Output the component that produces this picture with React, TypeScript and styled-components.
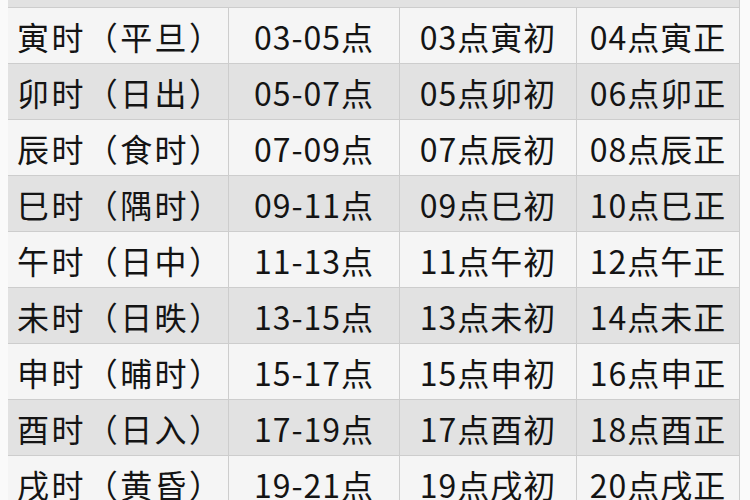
import React from "react";
import { styled, createGlobalStyle } from "styled-components";

const GlobalStyle = createGlobalStyle`
  html, body {
    margin: 0;
    padding: 0;
    background: #fafafa;
    overflow: hidden;
  }
  body {
    font-family: "Noto Sans CJK SC", "Noto Sans", sans-serif;
  }
`;

const Page = styled.div`
  width: 750px;
  height: 500px;
  overflow: hidden;
  padding-left: 8px;
  box-sizing: border-box;
`;

const Table = styled.div`
  width: 731px;
  display: grid;
  grid-template-columns: 220px 171px 177px 163px;
  border-right: 1px solid #cdcdcd;
`;

const HeaderStrip = styled.div`
  grid-column: 1 / -1;
  height: 7px;
  background: #e2e2e2;
  border-bottom: 1px solid #cdcdcd;
`;

const Cell = styled.div<{ $shade: boolean; $first?: boolean }>`
  height: 55px;
  box-sizing: content-box;
  display: flex;
  align-items: center;
  justify-content: ${(p) => (p.$first ? "flex-start" : "center")};
  padding-left: ${(p) => (p.$first ? "9px" : "0")};
  background: ${(p) => (p.$shade ? "#e2e2e2" : "#f5f5f5")};
  border-bottom: 1px solid #cdcdcd;
  border-left: ${(p) => (p.$first ? "none" : "1px solid #cdcdcd")};
  font-size: 32px;
  letter-spacing: ${(p) => (p.$first ? "2.4px" : "1px")};
  color: #141414;
  white-space: nowrap;
`;

const rows: string[][] = [
  ["寅时（平旦）", "03-05点", "03点寅初", "04点寅正"],
  ["卯时（日出）", "05-07点", "05点卯初", "06点卯正"],
  ["辰时（食时）", "07-09点", "07点辰初", "08点辰正"],
  ["巳时（隅时）", "09-11点", "09点巳初", "10点巳正"],
  ["午时（日中）", "11-13点", "11点午初", "12点午正"],
  ["未时（日昳）", "13-15点", "13点未初", "14点未正"],
  ["申时（晡时）", "15-17点", "15点申初", "16点申正"],
  ["酉时（日入）", "17-19点", "17点酉初", "18点酉正"],
  ["戌时（黄昏）", "19-21点", "19点戌初", "20点戌正"],
];

export default function App() {
  return (
    <>
      <GlobalStyle />
      <Page>
        <Table>
          <HeaderStrip />
          {rows.map((row, i) =>
            row.map((text, j) => (
              <Cell key={`${i}-${j}`} $shade={i % 2 === 1} $first={j === 0}>
                {text}
              </Cell>
            ))
          )}
        </Table>
      </Page>
    </>
  );
}
